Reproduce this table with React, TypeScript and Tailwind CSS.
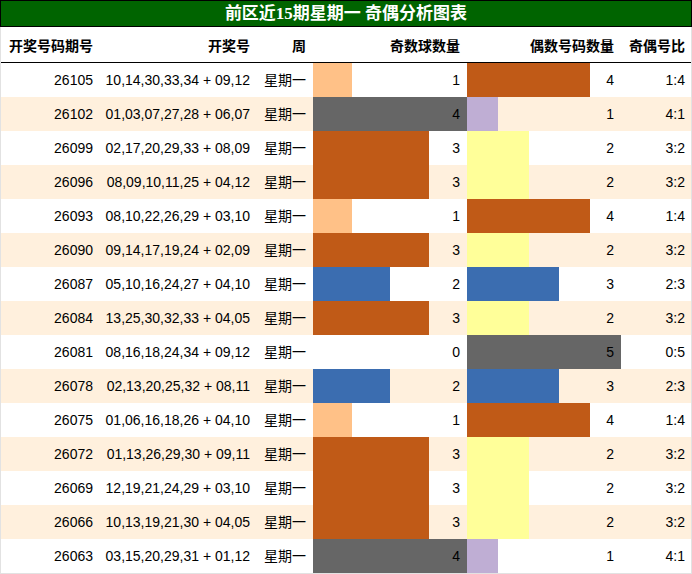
import React from "react";

type Row = { id: string; nums: string; odd: number; even: number; ratio: string };

const rows: Row[] = [
  { id: "26105", nums: "10,14,30,33,34 + 09,12", odd: 1, even: 4, ratio: "1:4" },
  { id: "26102", nums: "01,03,07,27,28 + 06,07", odd: 4, even: 1, ratio: "4:1" },
  { id: "26099", nums: "02,17,20,29,33 + 08,09", odd: 3, even: 2, ratio: "3:2" },
  { id: "26096", nums: "08,09,10,11,25 + 04,12", odd: 3, even: 2, ratio: "3:2" },
  { id: "26093", nums: "08,10,22,26,29 + 03,10", odd: 1, even: 4, ratio: "1:4" },
  { id: "26090", nums: "09,14,17,19,24 + 02,09", odd: 3, even: 2, ratio: "3:2" },
  { id: "26087", nums: "05,10,16,24,27 + 04,10", odd: 2, even: 3, ratio: "2:3" },
  { id: "26084", nums: "13,25,30,32,33 + 04,05", odd: 3, even: 2, ratio: "3:2" },
  { id: "26081", nums: "08,16,18,24,34 + 09,12", odd: 0, even: 5, ratio: "0:5" },
  { id: "26078", nums: "02,13,20,25,32 + 08,11", odd: 2, even: 3, ratio: "2:3" },
  { id: "26075", nums: "01,06,16,18,26 + 04,10", odd: 1, even: 4, ratio: "1:4" },
  { id: "26072", nums: "01,13,26,29,30 + 09,11", odd: 3, even: 2, ratio: "3:2" },
  { id: "26069", nums: "12,19,21,24,29 + 03,10", odd: 3, even: 2, ratio: "3:2" },
  { id: "26066", nums: "10,13,19,21,30 + 04,05", odd: 3, even: 2, ratio: "3:2" },
  { id: "26063", nums: "03,15,20,29,31 + 01,12", odd: 4, even: 1, ratio: "4:1" },
];

const oddColor: Record<number, string> = {
  0: "bg-transparent",
  1: "bg-[#ffc187]",
  2: "bg-[#3b6db0]",
  3: "bg-[#c05a17]",
  4: "bg-[#666666]",
  5: "bg-[#666666]",
};
const evenColor: Record<number, string> = {
  0: "bg-transparent",
  1: "bg-[#bfaed4]",
  2: "bg-[#ffff99]",
  3: "bg-[#3b6db0]",
  4: "bg-[#c05a17]",
  5: "bg-[#666666]",
};

const grid = "grid grid-cols-[99px_158px_55px_154px_154px_70px]";

function BarCell({ value, max, color }: { value: number; max: number; color: string }) {
  return (
    <div className="relative h-full">
      <div className={`h-full ${color}`} style={{ width: `${(value / max) * 100}%` }} />
      <div className="absolute inset-0 flex items-center justify-end pr-[7px]">{value}</div>
    </div>
  );
}

export default function App() {
  return (
    <div className="w-[692px] h-[574px] bg-white text-[14px] text-black font-['Liberation_Sans','Noto_Sans_CJK_SC',sans-serif] overflow-hidden">
      <div className="h-[27px] bg-[#006400] border border-black flex items-center justify-center text-white font-bold text-[17px] font-['Liberation_Serif','Noto_Sans_CJK_SC',serif] leading-none">
        前区近15期星期一 奇偶分析图表
      </div>
      <div className="border-x border-b border-[#e2e2e2]">
        <div className={`${grid} h-[36px] border-b border-black font-bold pt-[4px]`}>
          <div className="flex items-center justify-end pr-[7px]">开奖号码期号</div>
          <div className="flex items-center justify-end pr-2">开奖号</div>
          <div className="flex items-center justify-end pr-[7px]">周</div>
          <div className="flex items-center justify-end pr-[7px]">奇数球数量</div>
          <div className="flex items-center justify-end pr-[7px]">偶数号码数量</div>
          <div className="flex items-center justify-end pr-[6px]">奇偶号比</div>
        </div>
        {rows.map((r, i) => (
          <div key={r.id} className={`${grid} h-[34px] ${i % 2 === 1 ? "bg-[#fff0dd]" : "bg-white"}`}>
            <div className="flex items-center justify-end pr-[7px]">{r.id}</div>
            <div className="flex items-center justify-end pr-2">{r.nums}</div>
            <div className="flex items-center justify-end pr-[7px]">星期一</div>
            <BarCell value={r.odd} max={4} color={oddColor[r.odd]} />
            <BarCell value={r.even} max={5} color={evenColor[r.even]} />
            <div className="flex items-center justify-end pr-[6px]">{r.ratio}</div>
          </div>
        ))}
      </div>
    </div>
  );
}
